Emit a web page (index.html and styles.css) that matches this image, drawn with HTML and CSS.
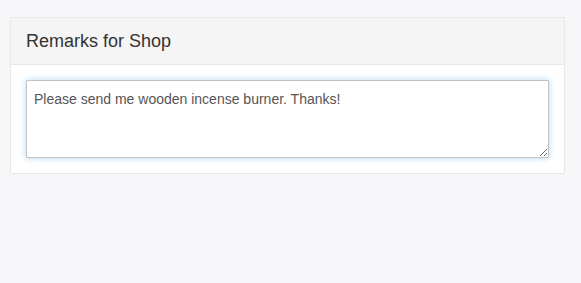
FILE: index.html
```html
<!DOCTYPE html>
<html lang="en">
<head>
    <meta charset="UTF-8">
    <meta name="viewport" content="width=device-width, initial-scale=1.0">
    <title>Remarks for Shop</title>
    <link rel="stylesheet" href="styles.css">
</head>
<body>
    <div class="panel">
        <div class="panel-heading">
            <h3 class="panel-title">Remarks for Shop</h3>
        </div>
        <div class="panel-body">
            <textarea class="remarks" rows="3">Please send me wooden incense burner. Thanks!</textarea>
        </div>
    </div>
</body>
</html>
```

FILE: styles.css
```css
body {
    margin: 0;
    padding: 17px 16px 0 10px;
    background-color: #f7f7f9;
    font-family: "Liberation Sans", Arial, sans-serif;
    color: #333;
}
.panel {
    background-color: #fff;
    border: 1px solid #e8e8ea;
}
.panel-heading {
    background-color: #f5f5f5;
    border-bottom: 1px solid #e8e8ea;
    padding: 11px 15px 10px;
}
.panel-title {
    margin: 0;
    font-size: 18px;
    font-weight: normal;
    line-height: 25px;
    color: #333;
}
.panel-body {
    padding: 15px;
}
.remarks {
    display: block;
    box-sizing: border-box;
    width: 100%;
    height: 78px;
    margin: 0;
    padding: 8px 7px;
    border: 1px solid #c2c2c2;
    border-radius: 1px;
    font-family: "Liberation Sans", Arial, sans-serif;
    font-size: 14px;
    line-height: 20px;
    color: #555;
    box-shadow: 0 0 6px rgba(102, 175, 233, 0.5);
    outline: none;
}
```
